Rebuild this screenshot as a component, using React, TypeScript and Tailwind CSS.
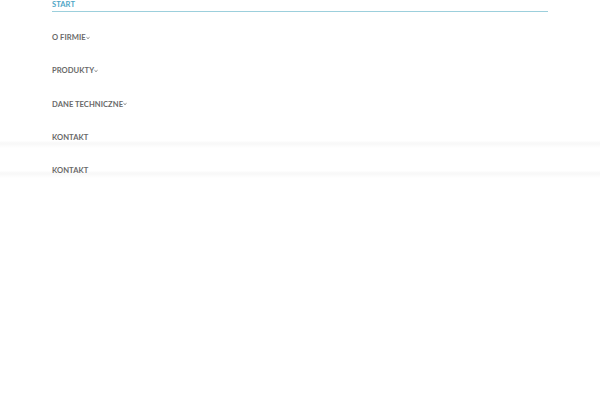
import React from "react";

function Chevron() {
  return (
    <svg width="4" height="4" viewBox="0 0 4 4">
      <path d="M0.5 1.3 L2 2.6 L3.5 1.3" fill="none" stroke="#777" strokeWidth="0.9" />
    </svg>
  );
}

function Item({ label, chevron }: { label: string; chevron?: boolean }) {
  return (
    <div className="h-[33.3px] flex items-center px-[52px]">
      <span className="text-[7.6px] leading-[9px] font-bold text-[#6a6a6a] tracking-[0.05px]">{label}</span>
      {chevron && <Chevron />}
    </div>
  );
}

export default function App() {
  return (
    <div className="w-[600px] h-[400px] bg-white overflow-hidden" style={{ fontFamily: "Lato, 'Liberation Sans', sans-serif" }}>
      <div className="px-[52px]">
        <div className="pb-[2px] border-b border-[#9ccfdc]">
          <span className="block text-[7.6px] leading-[9px] font-bold text-[#4fa6c6] tracking-[0.05px]">START</span>
        </div>
      </div>
      <div className="mt-[9px]">
        <Item label="O FIRMIE" chevron />
        <Item label="PRODUKTY" chevron />
        <Item label="DANE TECHNICZNE" chevron />
        <div className="bg-[linear-gradient(to_bottom,transparent_20px,#fafafa_21px,#f8f8f8_23px,#fcfcfc_25px,transparent_27px)]">
          <Item label="KONTAKT" />
        </div>
        <div className="bg-[linear-gradient(to_bottom,transparent_17px,#fafafa_18px,#f8f8f8_20px,#fcfcfc_22px,transparent_24px)]">
          <Item label="KONTAKT" />
        </div>
      </div>
    </div>
  );
}
